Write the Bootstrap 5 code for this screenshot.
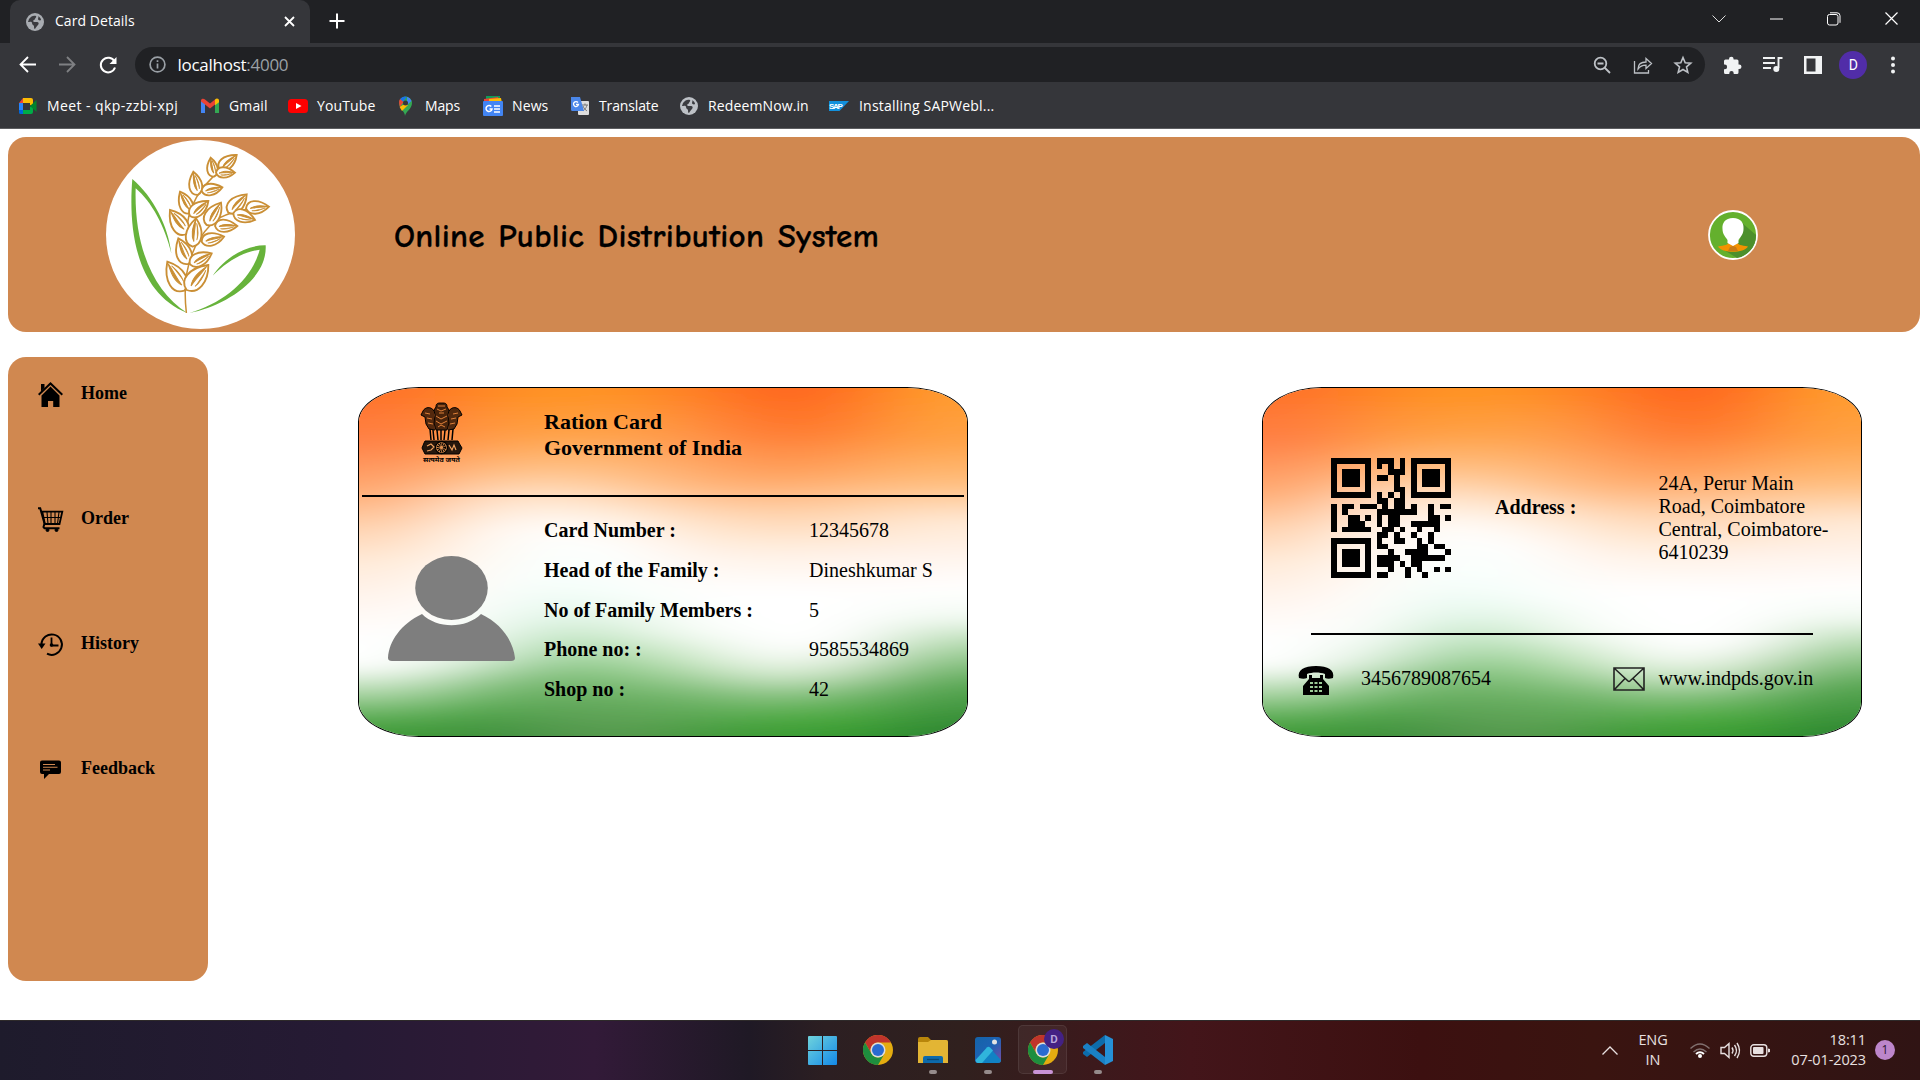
<!DOCTYPE html>
<html lang="en">
<head>
<meta charset="utf-8">
<title>Card Details</title>
<link href="https://cdn.jsdelivr.net/npm/bootstrap@5.3.0/dist/css/bootstrap.min.css" rel="stylesheet">
<style>
body{width:1920px;height:1080px;overflow:hidden;background:#fff;font-family:"Open Sans",sans-serif;color:#000}
svg{display:block;flex:none;overflow:visible}
.tabstrip{height:43px;background:#202124;padding-left:10px}
.tab-item{width:300px;height:43px;background:#35363a;border-radius:10px 10px 0 0;padding:0 12px 0 16px;color:#fff;font-size:14px}
.tab-item .tab-name{letter-spacing:.05px;margin:-2px 0 0 11px}
.winbtn{width:57.3px}
.toolbar{height:43px;background:#35363a;padding-left:7px}
.tool-cell{width:40.5px}
.omni{width:1570px;height:35px;border-radius:18px;background:#202124;margin-left:6px;color:#fff;font-size:17px;padding-left:14px;padding-right:1px}
.omni .url{letter-spacing:-.27px;margin-left:12px;line-height:1}
.omni .url span{color:#9aa0a6}
.bookmarks{height:43px;background:#35363a;border-bottom:1px solid #5c5d60;padding-left:18px;color:#fff;font-size:14px;line-height:1}
.bm{gap:9px;letter-spacing:-.14px;white-space:nowrap;margin-top:-2px}
.bm.wide{letter-spacing:.12px}
.bm.wider{letter-spacing:.42px}
.bm svg{width:20px;height:20px}
.web{height:891px;padding:8px 0 0 8px;font-family:"Liberation Serif",serif}
.banner{height:195px;background:#d08850;border-radius:18px;padding-left:98px;padding-right:162px}
.banner h1{font-family:"Comic Sans MS","Comic Neue","Noto Sans",sans-serif;font-size:33px;font-weight:700;margin:5px 0 0 99px;white-space:nowrap;letter-spacing:.3px;word-spacing:1.500px;-webkit-text-stroke:.25px #000}
.side{width:200px;height:624px;background:#d08850;border-radius:18px;margin-top:25px;padding-top:4px}
.side a{height:125px;padding:21px 0 0 30px;color:#000;text-decoration:none;font-weight:700;font-size:18px;line-height:25px;gap:18px}
.side a span{margin-top:-1px}
.idcard{height:350px;border:1px solid #000;border-radius:10%;overflow:hidden;margin-top:55px;position:relative;font-size:20px;line-height:23px}
.idcard .tri{position:absolute;inset:0;width:100%;height:100%}
.idcard .inner{position:relative;height:100%}
.front{width:610px;margin-left:150px}
.back{width:600px;margin-left:294px}
.rule{height:2px;background:#000;opacity:1;border:0;margin:0}
.front .top{height:107px;padding:14px 0 0 62px}
.front .top h2{font-size:22px;font-weight:700;line-height:26px;margin:7px 0 0 82px}
.facts{row-gap:16.8px;margin:22px 0 0 29px;display:grid;grid-template-columns:265px auto}
.back .top{height:245px;padding-left:68px}
.back .bottom{padding-left:35px;height:102px}
.taskbar{height:60px;border-top:1px solid #2e2a2a;background:linear-gradient(90deg,#1e1b2c 0,#261a34 18%,#321a38 31%,#1f1925 39%,#2c1f22 43%,#30201e 50%,#3c191c 57%,#43151a 62%,#3c1010 74%,#3a1410 83%,#301414 100%);color:#e8e0e0}
.tk{width:55px;height:58px}
.tk .run{width:8px;height:4px;border-radius:2px;background:#958b8b;position:absolute;left:23.5px;top:49px}
.tk.on .run{width:20px;left:18px;background:#c993d6}
.tk.on .plate{position:absolute;left:3px;top:4px;width:49px;height:49px;border-radius:5px;background:#ffffff0d;border:1px solid #ffffff14}
.tray{font-size:14.5px;line-height:20px;letter-spacing:-.1px}
</style>
<script src="https://cdn.jsdelivr.net/npm/bootstrap@5.3.0/dist/js/bootstrap.bundle.min.js"></script>
</head>
<body>
<svg width="0" height="0" class="position-absolute" aria-hidden="true">
<defs>
<filter id="soft" x="0" y="0" width="1" height="1"><feGaussianBlur stdDeviation="46 8"/></filter>
<symbol id="flag" viewBox="0 0 600 350" preserveAspectRatio="none"><g id="bands"></g></symbol>
<symbol id="globe" viewBox="0 0 18 18"><circle cx="9" cy="9" r="9" fill="#bdc1c6"/><path d="M3 6c2-3 5-4 7-3 1 1-1 2-1 3s-2 1-2 2 2 1 4 1 2 2 1 3-2 2-3 4c-1 0-1-2-1-3s-2-1-2-3-3-1-4-1M12 3c2 1 3 3 3 4-1 1-3 0-3-1s1-2 0-3" fill="#3b3c40"/></symbol>
<symbol id="chrome" viewBox="0 0 30 30"><circle cx="15" cy="15" r="15" fill="#e4ac10"/><path d="M2 7.500A15 15 0 0 1 28 7.500H15a7.500 7.500 0 0 0-6.500 11.250Z" fill="#c0342b"/><path d="M2 7.500A15 15 0 0 0 15 30l6.500-11.250A7.500 7.500 0 0 1 8.500 18.750Z" fill="#1e8e3e"/><circle cx="15" cy="15" r="7.500" fill="#ddd"/><circle cx="15" cy="15" r="6" fill="#2a6bd0"/></symbol>
</defs>
</svg>

<div class="d-flex flex-column">
<div class="tabstrip d-flex">
  <div class="tab-item d-flex align-items-center">
    <svg width="18" height="18"><use href="#globe" opacity=".85"/></svg>
    <span class="tab-name">Card Details</span>
    <svg class="ms-auto" width="17" height="17" viewBox="0 0 17 17" stroke="#fff" stroke-width="1.800"><path d="M4 4l9 9M13 4l-9 9"/></svg>
  </div>
  <svg class="mt-2" style="margin-left:19px" width="16" height="26" viewBox="0 0 16 26" stroke="#fff" stroke-width="2"><path d="M.5 13h15M8 5.500v15"/></svg>
  <div class="ms-auto d-flex align-items-center" style="height:37px">
    <div class="winbtn d-flex justify-content-center"><svg width="14" height="8" fill="none" stroke="#ddd"><path d="M.5.500l6.500 6.500 6.500-6.500"/></svg></div>
    <div class="winbtn d-flex justify-content-center"><svg width="13" height="2"><path d="M0 1h13" stroke="#fff"/></svg></div>
    <div class="winbtn d-flex justify-content-center"><svg width="14" height="14" fill="none" stroke="#fff"><rect x=".5" y="2.500" width="10.500" height="10.500" rx="2"/><path d="M3 .8h7a3 3 0 0 1 3 3v7"/></svg></div>
    <div class="winbtn d-flex justify-content-center"><svg width="13" height="13" stroke="#fff" stroke-width="1.200"><path d="M.5.500l12 12M12.500.500l-12 12"/></svg></div>
  </div>
</div>
<div class="toolbar d-flex align-items-center">
  <div class="tool-cell d-flex justify-content-center"><svg width="17" height="17" fill="none" stroke="#fff" stroke-width="1.800"><path d="M17 8.500H2M9 1L1.500 8.500 9 16"/></svg></div>
  <div class="tool-cell d-flex justify-content-center"><svg width="17" height="17" fill="none" stroke="#7f8083" stroke-width="1.800"><path d="M0 8.500h15M8 1l7.500 7.500L8 16"/></svg></div>
  <div class="tool-cell d-flex justify-content-center"><svg width="18" height="18" fill="none" stroke="#fff" stroke-width="2"><path d="M15.500 5.500A7.300 7.300 0 1 0 16 11.500"/><path d="M17.500 1v7h-7z" fill="#fff" stroke="none"/></svg></div>
  <div class="omni d-flex align-items-center">
    <svg width="17" height="17" fill="none" stroke="#9aa0a6" stroke-width="1.700"><circle cx="8.500" cy="8.500" r="7.400"/><path d="M8.500 7.500v5M8.500 4.300v1.800"/></svg>
    <div class="url">localhost<span>:4000</span></div>
    <div class="ms-auto d-flex">
      <div class="tool-cell d-flex justify-content-center"><svg width="18" height="18" fill="none" stroke="#bdc1c6" stroke-width="1.800"><circle cx="7.500" cy="7.500" r="5.800"/><path d="M11.500 11.500l5.500 5.500M4.500 7.500h6"/></svg></div>
      <div class="tool-cell d-flex justify-content-center"><svg width="20" height="18" fill="none" stroke="#bdc1c6" stroke-width="1.300"><path d="M1.500 5v12h14v-3M5 13c0-5 3-7 8-7V2.500l5.500 5-5.500 5V9.200c-4 0-6 1-8 3.800z"/></svg></div>
      <div class="tool-cell d-flex justify-content-center"><svg width="18" height="18" fill="none" stroke="#bdc1c6" stroke-width="1.600"><path d="M9 1.500l2.200 5.200 5.600.5-4.300 3.700 1.300 5.500L9 13.500l-4.800 2.900 1.300-5.500L1.200 7.200l5.600-.5z"/></svg></div>
    </div>
  </div>
  <div class="d-flex align-items-center" style="margin-left:8px">
    <div class="tool-cell d-flex justify-content-center"><svg width="18" height="18" fill="#f1f3f4"><path d="M0 5a1.500 1.500 0 0 1 1.500-1.500H5V3a2.300 2.300 0 0 1 4.600 0v.500H13A1.500 1.500 0 0 1 14.500 5v3.500h.700a2.300 2.300 0 0 1 0 4.600h-.7v3.400A1.500 1.500 0 0 1 13 18H9.700v-.800a2.200 2.200 0 0 0-4.400 0v.8H1.500A1.500 1.500 0 0 1 0 16.500v-3.300h.8a2.300 2.300 0 0 0 0-4.600H0z"/></svg></div>
    <div class="tool-cell d-flex justify-content-center"><svg width="20" height="17" fill="none" stroke="#f1f3f4" stroke-width="1.900"><path d="M0 2h12M0 7h12M0 12h8M15.500 12V2h4"/><circle cx="13.300" cy="13" r="3" fill="#f1f3f4" stroke="none"/></svg></div>
    <div class="tool-cell d-flex justify-content-center" style="width:39.5px"><svg width="18" height="18"><path fill="#f1f3f4" fill-rule="evenodd" d="M0 0h18v18H0zM2.500 2.500v13h9v-13z"/></svg></div>
    <div class="tool-cell d-flex justify-content-center"><div class="rounded-circle d-flex align-items-center justify-content-center text-white" style="width:28px;height:28px;background:#512da8;font:14px Roboto,sans-serif">D</div></div>
    <div class="d-flex justify-content-center" style="width:38px"><svg width="4" height="18" fill="#f1f3f4"><circle cx="2" cy="2.500" r="2"/><circle cx="2" cy="9" r="2"/><circle cx="2" cy="15.500" r="2"/></svg></div>
  </div>
</div>
<div class="bookmarks d-flex align-items-center">
  <div class="bm wider d-flex align-items-center" style="width:182px"><svg viewBox="0 0 20 20"><path d="M5 2v5H1z" fill="#ea4335"/><path d="M5 2h8a2 2 0 0 1 2 2v6l-3-1V7H5z" fill="#fbbc04"/><path d="M1 7h4v7H1z" fill="#2684fc"/><path d="M1 14h4v4H2.500A1.500 1.500 0 0 1 1 16.500z" fill="#0066da"/><path d="M5 14h7v-3l3-2v7a2 2 0 0 1-2 2H5z" fill="#00ac47"/><path d="M12 10l6.500-6v12z" fill="#00832d"/></svg>Meet - qkp-zzbi-xpj</div>
  <div class="bm wide d-flex align-items-center" style="width:88px"><svg viewBox="0 0 20 20"><path d="M1 17V4h4v13z" fill="#4285f4"/><path d="M15 17V4h4v13z" fill="#34a853"/><path d="M1 4c1-2 3-1.500 4-.5l5 4 5-4v5l-5 4-5-4-4-3z" fill="#ea4335"/><path d="M15 3.500c2-2 4-.5 4 1v1.800l-4 3z" fill="#fbbc04"/></svg>Gmail</div>
  <div class="bm wide d-flex align-items-center" style="width:108px"><svg viewBox="0 0 20 20"><rect y="3" width="20" height="14" rx="3.500" fill="#f00"/><path d="M8 7l5.500 3L8 13z" fill="#fff"/></svg>YouTube</div>
  <div class="bm d-flex align-items-center" style="width:87px"><svg viewBox="0 0 20 20"><path d="M9 20c0-5-6-7-6-13a6.500 6.500 0 0 1 13 0c0 6-6 8-7 13z" fill="#34a853"/><path d="M4 3a6.500 6.500 0 0 1 7-2.200L5 8z" fill="#1a73e8"/><path d="M11 .8A6.500 6.500 0 0 1 15.500 5L11 9z" fill="#4285f4"/><path d="M4 3l3.500 3L4 11C3 8 2.500 5 4 3z" fill="#ea4335"/><path d="M7 9l5 0-6 6-2.400-4z" fill="#fbbc04"/><circle cx="9.500" cy="7" r="2.500" fill="#35363a"/></svg>Maps</div>
  <div class="bm wide d-flex align-items-center" style="width:87px"><svg viewBox="0 0 20 20"><path d="M3 0h14v6H3z" fill="#0f9d58"/><path d="M1 3l14-2 2 5H1z" fill="#ea4335"/><path d="M6 3l12-1 1 5H6z" fill="#fbbc04"/><rect y="5" width="20" height="15" rx="1" fill="#4285f4"/><path d="M8.300 10.500a3 3 0 1 0 .7 2.500H6.500M11 10h6M11 13h6M11 16h6" stroke="#fff" stroke-width="1.500" fill="none"/></svg>News</div>
  <div class="bm d-flex align-items-center" style="width:109px"><svg viewBox="0 0 20 20"><rect x="8" y="5" width="11" height="14" rx="1" fill="#ddd"/><path d="M12 9h6M15 7.500V9M17 9c-1 4-3 5-4 6M13 10c1 3 3 4 4 5" stroke="#777" fill="none"/><path d="M1 1h9l4 14H2a1.500 1.500 0 0 1-1-1.500z" fill="#4a86e8"/><path d="M8 6.500a2.500 2.500 0 1 0 .5 2H6" stroke="#fff" stroke-width="1.300" fill="none"/></svg>Translate</div>
  <div class="bm wide d-flex align-items-center" style="width:150px"><svg viewBox="-1 -1 20 20"><use href="#globe" width="18" height="18"/></svg>RedeemNow.in</div>
  <div class="bm wide d-flex align-items-center"><svg viewBox="0 0 20 20"><path d="M0 5h20L10.500 15H0z" fill="#1290dc"/><text x="0" y="13" font-family="Liberation Sans" font-size="8" font-weight="700" fill="#fff" textLength="14">SAP</text></svg><span style="margin-left:1px;letter-spacing:.2px">Installing SAPWebl...</span></div>
</div>

<main class="web">
  <header class="banner d-flex align-items-center">
    <svg width="189" height="189" viewBox="48 30 567 567"><circle cx="331.500" cy="313.500" r="283.500" fill="#fff"/>
      <g fill="#67b33b"><path d="M127 147C116 280 130 485 292 549C190 485 132 350 137 175C185 215 225 290 244 370C235 290 190 200 127 147Z"/><path d="M298 549C400 530 533 450 527 346C460 345 400 390 368 437C410 395 460 365 509 359C485 450 400 520 298 549Z"/></g>
      <g id="wheat" fill="none" stroke="#ca8f35" stroke-width="4.500" stroke-linecap="round"><path d="M289 547C280 470 288 390 330 325S410 250 470 238M288 325C290 220 335 170 395 116"/></g>
    </svg>
    <h1>Online Public Distribution System</h1>
    <svg class="ms-auto" width="50" height="50" viewBox="0 0 50 50"><circle cx="25" cy="25" r="24" fill="#64b02d" stroke="#fff" stroke-width="1.800"/><path d="M33 12l15 13a23 23 0 0 1-19 23L16 40l16-10z" fill="#4c8f2c"/><path d="M10 36.500c7-1 10-2 11-4h8c1 2 4 3 11 4-4 7-26 7-30 0z" fill="#f39200"/><path d="M22 37l3-1 3 1 2 4h-10z" fill="#c97a14"/><path d="M25 8c8 0 11 5 10.500 11 0 5-3 8-5 11v3l-5.500 3-5.500-3v-3c-2-3-5-6-5-11C14 13 17 8 25 8z" fill="#fff"/></svg>
  </header>
  <div class="d-flex align-items-start">
    <nav class="side">
      <a href="#" class="d-flex align-items-start"><svg width="25" height="25" viewBox="0 0 25 25"><path d="M3 2h3.500v4L3 9.500z"/><path d="M.7 12.800L12.500 1.500l11.800 11.300" fill="none" stroke="#000" stroke-width="2"/><path d="M3.500 13.500l9-9 9 9V25h-6.300v-6H10v6H3.500z"/></svg><span>Home</span></a>
      <a href="#" class="d-flex align-items-start"><svg width="25" height="25" viewBox="0 0 25 25" fill="none" stroke="#000"><path d="M0 1.200h2.200L6.500 16.500 5.500 20l1 1.300h15" stroke-width="2"/><path d="M4.300 4.700h20L21.500 17H6.800z" stroke-width="1.800"/><path d="M5.500 10.500h17.500M9 5l1 12M13 5v12M17 5v12M21 5l-1.500 12" stroke-width="1.100"/><circle cx="9.500" cy="23" r="1.500" fill="#000"/><circle cx="18.500" cy="23" r="1.500" fill="#000"/></svg><span>Order</span></a>
      <a href="#" class="d-flex align-items-start"><svg width="25" height="25" viewBox="0 0 25 25" fill="none" stroke="#000" stroke-width="2"><path d="M3.500 12A10.200 10.200 0 1 1 9 21.700"/><path d="M0 11.500h7.500L3.700 17z" fill="#000" stroke="none"/><path d="M13.500 5.500v8h7" stroke-width="1.800"/><circle cx="13.500" cy="13" r="1.800" fill="#000" stroke="none"/></svg><span>History</span></a>
      <a href="#" class="d-flex align-items-start"><svg width="25" height="25" viewBox="0 0 25 25"><path d="M4 3.500h17a2 2 0 0 1 2 2v9.500a2 2 0 0 1-2 2H11l-5 5v-5H4a2 2 0 0 1-2-2V5.500a2 2 0 0 1 2-2z"/><path d="M5 7.500h12M5 10.300h14.500M5 13h7" stroke="#d08850" stroke-width="1.100"/></svg><span>Feedback</span></a>
    </nav>

    <section class="idcard front">
      <svg class="tri"><use href="#flag" width="100%" height="100%"/></svg>
      <div class="inner">
        <div class="top d-flex align-items-start">
          <svg width="41" height="60" viewBox="0 0 41 60" fill="none" stroke="#000">
            <path d="M15 5c0-4 2-4 5.500-4S26 1 26 5l2 3-1 5 1 8-2 7H15l-2-7 1-8-1-5z" fill="#1a0a00" fill-opacity=".8"/>
            <path d="M13 9C10 4 4 5 2 9l-2 4 4 2 1 7 3 5 6 1M28 9c3-5 9-4 11 0l2 4-4 2-1 7-3 5-6 1" fill="#1a0a00" fill-opacity=".75"/>
            <path d="M17 4h7M16 7l4 2 5-2M18 11h5M15 14l5 3 6-3M15 19l5 3 6-3M17 25l3-2 4 2M4 11l5 1M6 16l5 1M7 21l5 1M37 11l-5 1M35 16l-5 1M34 21l-5 1" stroke="#f08a3e" stroke-width=".9"/>
            <path d="M9 27l1 11M12 28l1 10M16 28l1 10M20 28v10M24 28l-1 10M28 28l-1 10M32 27l-1 11" stroke-width="1.500"/>
            <path d="M4 39h33l1 2 3 5-3 6H4l-3-6 2-5z" fill="#000" fill-opacity=".85"/>
            <circle cx="20.500" cy="45.500" r="6" fill="#e2914f" stroke-width="1.300"/><circle cx="20.500" cy="45.500" r="3.200" stroke-dasharray="1 .7" stroke-width="3"/>
            <path d="M6 44l4-2 3 3-3 3-4 1M28 43l3 5 2-5 2 5" stroke="#efa15f" stroke-width="1.200"/>
            <text x="2" y="59.500" font-family="Noto Sans,sans-serif" font-size="6" font-weight="700" fill="#000" stroke="none" textLength="37" lengthAdjust="spacingAndGlyphs">सत्यमेव जयते</text>
          </svg>
          <h2>Ration Card<br>Government of India</h2>
        </div>
        <hr class="rule" style="margin:0 3px">
        <div class="d-flex align-items-start">
          <svg style="margin:59px 0 0 29px" width="127" height="106" viewBox="0 0 127 106" fill="#7e7e7e"><ellipse cx="63.500" cy="32" rx="36.300" ry="32"/><path d="M34 58C13 68 1 85 0 102q0 3 4 3h119q4 0 4-3C125 85 114 68 93 58C78 73 49 73 34 58z"/></svg>
          <div class="facts">
            <b>Card Number :</b><span>12345678</span>
            <b>Head of the Family :</b><span>Dineshkumar S</span>
            <b>No of Family Members :</b><span>5</span>
            <b>Phone no: :</b><span>9585534869</span>
            <b>Shop no :</b><span>42</span>
          </div>
        </div>
      </div>
    </section>

    <section class="idcard back">
      <svg class="tri"><use href="#flag" width="100%" height="100%"/></svg>
      <div class="inner">
        <div class="top d-flex align-items-start">
          <svg id="qr" style="margin-top:70px" width="120" height="120" viewBox="0 0 21 21" shape-rendering="crispEdges"></svg>
          <b style="margin:108px 0 0 44px;width:163.5px">Address :</b>
          <div style="margin-top:84px;width:176px">24A, Perur Main Road, Coimbatore Central, Coimbatore-6410239</div>
        </div>
        <hr class="rule" style="margin:0 48px">
        <div class="bottom d-flex align-items-start">
          <svg style="margin-top:31px" width="36" height="29" viewBox="0 0 36 29"><path d="M1 12C-1 4 6 0 18 0s19 4 17 12c-3 1-6 1-8 0V8c-5-2-13-2-18 0v4c-2 1-5 1-8 0z"/><path d="M11 9h3v3h8V9h3v4l6 7v9H5v-9l6-7z"/><path d="M12 16h3v2h-3zm4.500 0h3v2h-3zm4.500 0h3v2h-3zM12 20h3v2h-3zm4.500 0h3v2h-3zm4.500 0h3v2h-3zM12 24h3v2h-3zm4.500 0h3v2h-3zm4.500 0h3v2h-3z" fill="#9ccc97"/></svg>
          <span style="margin:32px 0 0 27px;width:252px">3456789087654</span>
          <svg style="margin-top:32px" width="32" height="24" viewBox="0 0 32 24" fill="none" stroke="#222" stroke-width="1.600"><path d="M1 1h30v22H1zM1 1l14 13q1 1 2 0L31 1M1 23l11-11.500M31 23L20 11.500"/></svg>
          <span style="margin:32px 0 0 13.500px">www.indpds.gov.in</span>
        </div>
      </div>
    </section>
  </div>
</main>

<footer class="taskbar d-flex align-items-start">
  <div class="d-flex" style="margin-left:795px">
    <div class="tk position-relative d-flex justify-content-center align-items-center"><svg width="29" height="29"><defs><linearGradient id="w" x2="1" y2="1"><stop stop-color="#6fd3dc"/><stop offset="1" stop-color="#1389e8"/></linearGradient></defs><path d="M0 1q0-1 1-1h13v14H0zM15 0h13q1 0 1 1v13H15zM0 15h14v14H1q-1 0-1-1zM15 15h14v13q0 1-1 1H15z" fill="url(#w)"/></svg></div>
    <div class="tk position-relative d-flex justify-content-center align-items-center"><svg width="30" height="30"><use href="#chrome"/></svg></div>
    <div class="tk position-relative d-flex justify-content-center align-items-center"><svg width="30" height="27"><path d="M0 2q0-2 2-2h8l3 3h15q2 0 2 2v5H0z" fill="#b8860b"/><path d="M0 5h10l3-2h15q2 0 2 2v21H0z" fill="#e3b534"/><path d="M5 26v-5q0-2 2-2h16q2 0 2 2v5z" fill="#0d6aab"/><path d="M9 22.500h12" stroke="#084873" stroke-width="1.300"/></svg><i class="run"></i></div>
    <div class="tk position-relative d-flex justify-content-center align-items-center"><svg width="26" height="26"><defs><linearGradient id="ph" x2="1" y2="1"><stop stop-color="#1463a8"/><stop offset=".5" stop-color="#1d62b4"/><stop offset="1" stop-color="#7c4ba6"/></linearGradient></defs><rect width="26" height="26" rx="3" fill="url(#ph)"/><path d="M1 25L11.500 10.500q1.500-1.500 3 0L26 23q0 3-3 3H3z" fill="#1182c4"/><path d="M.5 23L12 10.500q1.500-1.500 3 0l3 3L7 26H3q-2 0-2.500-3z" fill="#30b5dc"/><circle cx="19.500" cy="5" r="2.500" fill="#e3e3e3"/></svg><i class="run"></i></div>
    <div class="tk on position-relative d-flex justify-content-center align-items-center"><i class="plate"></i><svg class="position-relative" width="30" height="30" viewBox="0 0 30 30"><use href="#chrome" width="30" height="30"/><circle cx="26" cy="4" r="10" fill="#432184"/><text x="26" y="8" font-size="11.500" font-weight="600" fill="#b9a7dc" text-anchor="middle" font-family="Roboto">D</text></svg><i class="run"></i></div>
    <div class="tk position-relative d-flex justify-content-center align-items-center"><svg width="30" height="30"><path d="M22 0l8 4v22l-8 4z" fill="#2590d6"/><path d="M22 0v8L4 22l-4-3v-2z" fill="#0d6cab"/><path d="M22 30v-8L4 8l-4 3v2z" fill="#1a80c4"/></svg><i class="run"></i></div>
  </div>
  <div class="tray d-flex align-items-center" style="height:58px;margin-left:477px">
    <svg width="16" height="9" fill="none" stroke="#e8e0e0" stroke-width="1.300"><path d="M.5 8.500L8 1l7.500 7.500"/></svg>
    <div class="text-center" style="width:70px">ENG<br>IN</div>
    <svg style="margin-left:2px" width="20" height="15" fill="none" stroke-width="1.400"><path d="M.5 5.500q9.500-9 19 0M3.500 9q6.500-6 13 0" stroke="#81706f"/><path d="M6 11q4-3.500 8 0" stroke="#fff" stroke-width="2"/><circle cx="10" cy="13" r="2" fill="#fff"/></svg>
    <svg style="margin-left:10px" width="20" height="17" fill="none" stroke="#e8e0e0" stroke-width="1.400"><path d="M1 5.500h3.500L9 1.500v14l-4.500-4H1zM12 5.500q2 3 0 6M14.500 3q4 5.500 0 11M17 1q5 7.500 0 15"/></svg>
    <svg style="margin-left:10px" width="20" height="13"><rect x=".8" y=".8" width="16" height="11.500" rx="3" fill="none" stroke="#e8e0e0" stroke-width="1.400"/><rect x="3" y="3" width="10.500" height="7" rx="1" fill="#e8e0e0"/><path d="M18 4.500l2 .5v3l-2 .5z" fill="#e8e0e0"/></svg>
    <div class="text-end" style="width:96px">18:11<br>07-01-2023</div>
    <div class="rounded-circle text-center" style="margin-left:9px;width:20px;height:20px;background:#bd86cb;color:#2a1430;font-size:12px">1</div>
  </div>
</footer>
</div>

<script>
const NS='http://www.w3.org/2000/svg';
function add(parent,tag,attrs){const e=document.createElementNS(NS,tag);for(const k in attrs)e.setAttribute(k,attrs[k]);parent.appendChild(e);return e}

// Tricolour backdrop: vertical gradients side by side, blended by a horizontal blur
const cols=[
'0 ff7026,.15 ff8046,.3 ffac74,.4 ffd2ae,.5 ffead8,.62 fff6f0,.72 ffffff,.8 ffffff,.88 a8d4a2,.95 58ab50,1 3c9a36',
'0 ff8322,.15 ff9a48,.25 ffbd84,.33 ffe0c6,.42 fff6ec,.6 ffffff,.7 fafefc,.78 dcf0dc,.86 88c482,.93 4fa648,1 3c8e3a',
'0 ff9420,.12 ffa040,.22 ffbe80,.32 ffe8d4,.4 ffffff,.55 f6fffc,.65 e0f6e8,.75 b0dcb0,.85 70b468,1 4c9448',
'0 ff9022,.15 ffa552,.27 ffc48e,.37 ffeedd,.45 ffffff,.6 f8fffc,.7 daf0da,.8 98d092,.9 66ac5e,1 5a9a50',
'0 ff7c22,.15 ff944a,.28 ffb478,.38 ffe0c4,.5 fff6f0,.6 ffffff,.7 fcfffc,.79 cce8c6,.88 78ba70,1 40983a',
'0 ff601a,.12 ff742c,.25 ffa05c,.36 ffd0a8,.46 ffeede,.58 ffffff,.76 ffffff,.82 e0f0dc,.89 88c280,.95 4caa40,1 3c9c34',
'0 ff7022,.12 ff8434,.25 ffac68,.36 ffd8b4,.48 fff2ea,.6 ffffff,.73 ffffff,.81 c8e2c0,.88 74b86c,.95 48a83c,1 369a30',
'0 ff9c2a,.15 ffa246,.27 ffbd7c,.38 ffe8d4,.5 fff6f0,.58 ffffff,.66 f2faf2,.75 a8d4a2,.85 5aa854,.95 389038,1 2c8432'];
const bands=document.getElementById('bands');
const blurred=add(bands,'g',{filter:'url(#soft)'});
cols.forEach((c,i)=>{
  const g=add(bands,'linearGradient',{id:'b'+i,gradientUnits:'userSpaceOnUse',x1:0,y1:0,x2:0,y2:350});
  c.split(',').forEach(s=>{const [o,h]=s.split(' ');add(g,'stop',{offset:o,'stop-color':'#'+h})});
  const x=i===0?-200:i*75, w=(i===0||i===7)?275:75;
  add(blurred,'rect',{x:x,y:-40,width:w+.5,height:430,fill:`url(#b${i})`});
});

// Wheat grains: base x, base y, tip x, tip y
[[388,118,440,75],[372,140,362,83],[378,128,435,128],[323,195,310,125],[335,184,397,172],[302,250,270,185],[300,258,355,213],[290,312,240,240],
[468,235,537,230],[415,248,470,193],[430,250,495,270],[350,285,393,218],[375,288,442,288],[308,350,318,265],[335,335,402,320],[295,402,265,325],[300,403,365,370],[283,482,232,395],[290,480,355,405]].forEach(([x,y,u,v])=>{
  const a=Math.atan2(v-y,u-x)*180/Math.PI,s=Math.hypot(u-x,v-y)/100;
  const g=add(document.getElementById('wheat'),'g',{transform:`translate(${x} ${y}) rotate(${a}) scale(${s})`,'stroke-width':5.6/s});
  add(g,'path',{d:'M0 0C8-36 54-40 100 0C60 36 12 34 0 0Z',fill:'#fff'});
  add(g,'path',{d:'M18 2C40-12 65-8 94-1C70 2 45-2 18 2ZM26 12C45 16 65 11 82 5',fill:'#ca8f35','stroke-width':3/s});
});

// QR modules by row
const qr=['111111101110101111111','100000101010101000001','101110100011101011101','101110101101001011101','101110100001001011101','100000100001101000001','111111101010101111111',
'000000001101100000000','101101110101101001011','101000001111111001000','100110101011000001101','100111001011001111100','101111100110100100100','000000001101001001000',
'111111101001100101000','100000101100000110110','101110100010011110001','101110101111001111110','101110101110101100000','100000100010010100101','111111101100010010000'];
qr.forEach((r,y)=>[...r].forEach((m,x)=>{if(m==='1')add(document.getElementById('qr'),'rect',{x:x,y:y,width:1,height:1})}));
</script>
</body>
</html>
